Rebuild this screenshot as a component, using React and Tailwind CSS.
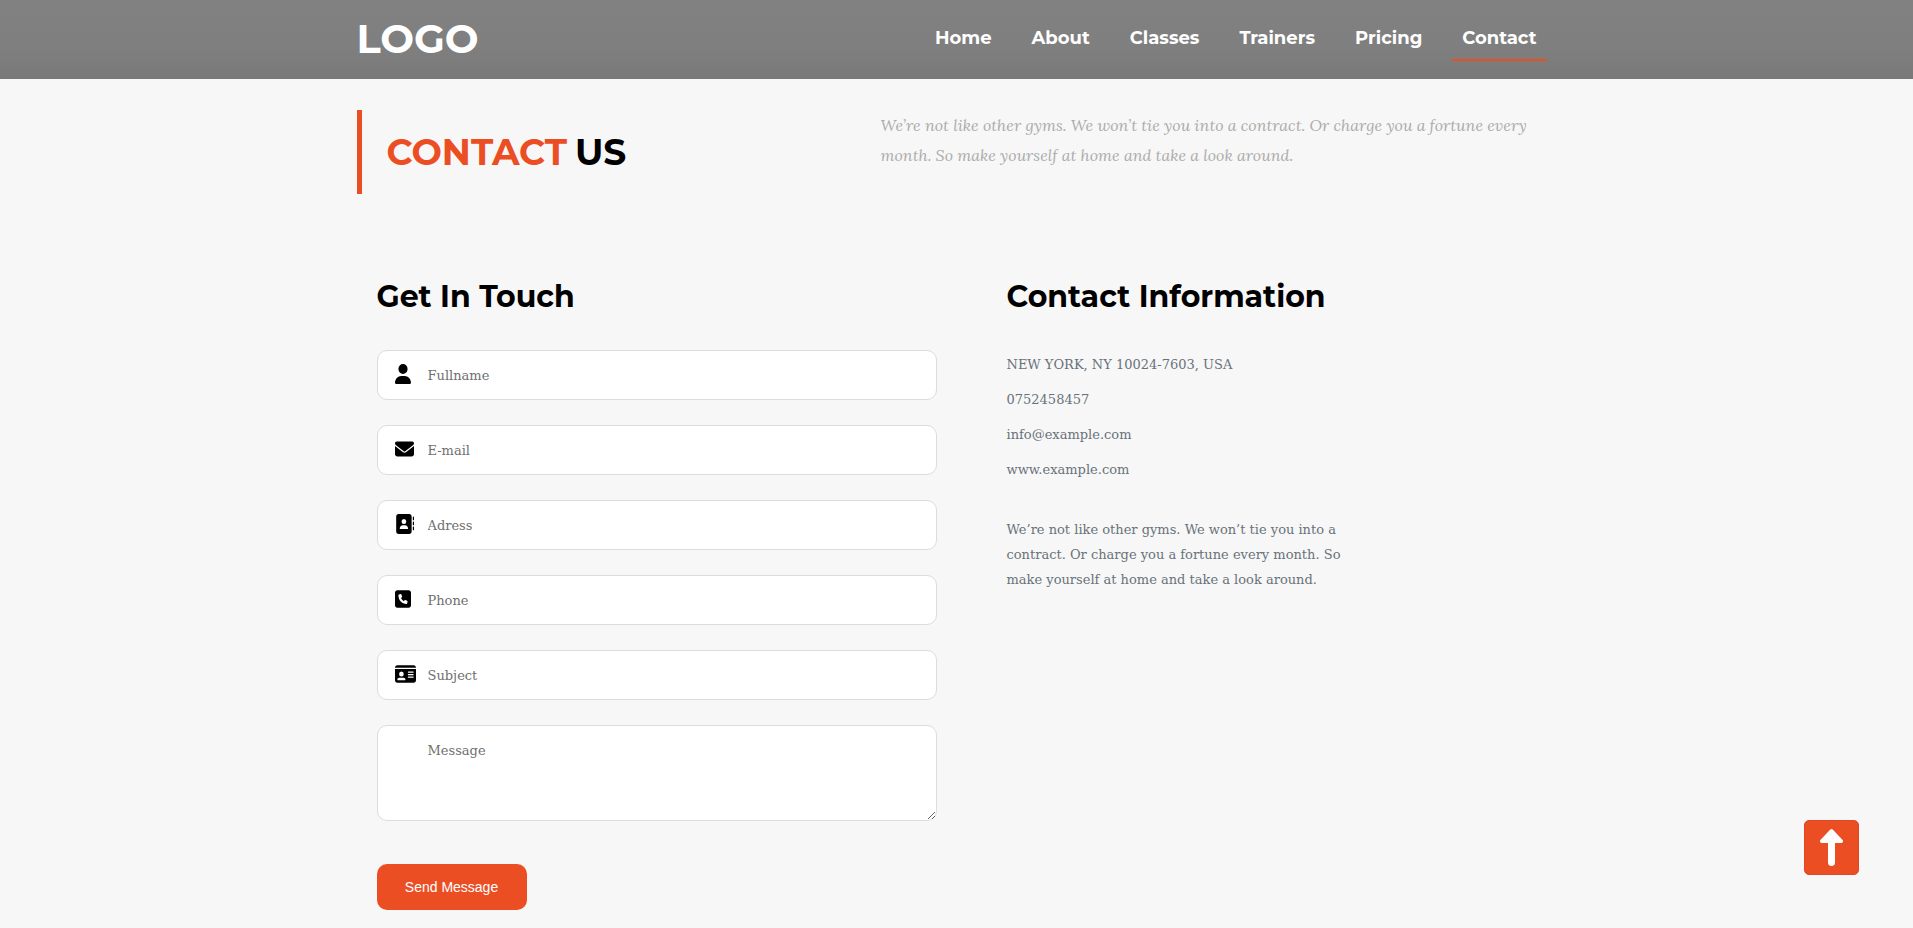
import React from "react";
import { FaUser, FaEnvelope, FaAddressBook, FaSquarePhone, FaIdCard } from "react-icons/fa6";

const NAV = ["Home", "About", "Classes", "Trainers", "Pricing", "Contact"];

const FIELDS = [
  { id: "fullname", label: "Fullname", type: "text", Icon: FaUser, size: "w-4" },
  { id: "email", label: "E-mail", type: "email", Icon: FaEnvelope, size: "w-[19px]" },
  { id: "address", label: "Adress", type: "text", Icon: FaAddressBook, size: "w-[19px]" },
  { id: "phone", label: "Phone", type: "tel", Icon: FaSquarePhone, size: "w-4" },
  { id: "subject", label: "Subject", type: "text", Icon: FaIdCard, size: "w-[21px]" },
];

const CONTACTS = ["NEW YORK, NY 10024-7603, USA", "0752458457", "info@example.com", "www.example.com"];

const sans = "font-['Montserrat','Inter',sans-serif]";
const slab = "font-['Roboto_Slab','DejaVu_Serif',serif]";
const fieldBox =
  "w-full rounded-[10px] border border-[#dcdcdc] bg-white pl-[50px] pr-4 text-[13px] text-[#6f6f6f] placeholder:text-[#6f6f6f] outline-none focus:border-[#ec4e24]";

function Header() {
  return (
    <header className={`bg-linear-to-b from-[#818181] via-[#7f7f7f] via-60% to-[#797979] ${sans}`}>
      <div className="mx-auto flex h-[79px] max-w-[1200px] items-center justify-between pr-2.5">
        <a href="#" className="pb-0.5 text-[40px] leading-none font-bold text-white">LOGO</a>
        <nav className="flex gap-5">
          {NAV.map((item) => (
            <a
              key={item}
              href={`#${item.toLowerCase()}`}
              className={`border-b-2 px-2.5 pt-[5px] pb-[7px] text-[18px] leading-7 font-bold text-white ${
                item === "Contact" ? "border-[#ec4e24]" : "border-transparent"
              }`}
            >
              {item}
            </a>
          ))}
        </nav>
      </div>
    </header>
  );
}

function Field({ id, label, type, Icon, size }) {
  return (
    <div className="relative">
      <label htmlFor={id} aria-label={label} className="absolute top-3.5 left-[18px] text-black">
        <Icon className={`h-5 ${size}`} preserveAspectRatio="none" aria-hidden="true" />
      </label>
      <input id={id} type={type} placeholder={label} className={`h-[50px] ${fieldBox} ${slab}`} />
    </div>
  );
}

export default function App() {
  return (
    <div className="min-h-screen bg-[#f7f7f7]">
      <Header />
      <main className="mx-auto max-w-[1200px]">
        <section className="flex pt-[31px]">
          <div className="flex h-[84px] w-[524px] shrink-0 items-center border-l-[5px] border-[#ec4e24] pl-[25px]">
            <h1 className={`flex gap-2 text-[36px] leading-none font-bold text-black ${sans}`}>
              <span className="text-[#ec4e24]">CONTACT</span>
              <span>US</span>
            </h1>
          </div>
          <p className="font-['Lora','Liberation_Serif',serif] text-[16px] leading-[30px] text-[#acacac] italic">
            We’re not like other gyms. We won’t tie you into a contract. Or charge you a fortune every month. So make
            yourself at home and take a look around.
          </p>
        </section>

        <section className="flex gap-[70px] px-5 pt-20 pb-4">
          <div className="w-[560px]">
            <h2 className={`text-[30px] leading-[46px] font-bold text-black ${sans}`}>Get In Touch</h2>
            <form className="mt-[30px] flex flex-col gap-[25px]" onSubmit={(e) => e.preventDefault()}>
              {FIELDS.map((field) => (
                <Field key={field.id} {...field} />
              ))}
              <label className="flex" aria-label="Message">
                <textarea
                  placeholder="Message"
                  className={`h-24 resize pt-[15px] leading-5 ${fieldBox} ${slab}`}
                />
              </label>
              <button
                type="submit"
                className="mt-[18px] h-[46px] w-[150px] rounded-[10px] bg-[#ec4e24] font-['Liberation_Sans',sans-serif] text-[14px] text-white"
              >
                Send Message
              </button>
            </form>
          </div>

          <div className="flex-1">
            <h2 className={`text-[30px] leading-[46px] font-bold text-black ${sans}`}>Contact Information</h2>
            <div className={`text-[13px] text-[#69727a] ${slab}`}>
              <ul className="mt-[27px]">
                {CONTACTS.map((line) => (
                  <li key={line} className="leading-[35px]">{line}</li>
                ))}
              </ul>
              <p className="mt-[30px] max-w-[350px] leading-[25px]">
                We’re not like other gyms. We won’t tie you into a contract. Or charge you a fortune every month. So
                make yourself at home and take a look around.
              </p>
            </div>
          </div>
        </section>
      </main>

      <button
        type="button"
        aria-label="Back to top"
        className="fixed right-[54px] bottom-[53px] flex size-[55px] items-center justify-center rounded-[5px] border border-[#dd4923] bg-[#ec4e24] text-white"
      >
        <svg viewBox="0 0 23 37" className="h-[37px] w-[23px]" fill="currentColor" aria-hidden="true">
          <path d="M10.3 .6a1.8 1.8 0 0 1 2.4 0L22.4 10.7c1.3 1.4.4 3.3-1.3 3.3H15v19.5a3.5 3.5 0 0 1-7 0V14H1.9C.2 14-.7 12.1.6 10.7z" />
        </svg>
      </button>
    </div>
  );
}
